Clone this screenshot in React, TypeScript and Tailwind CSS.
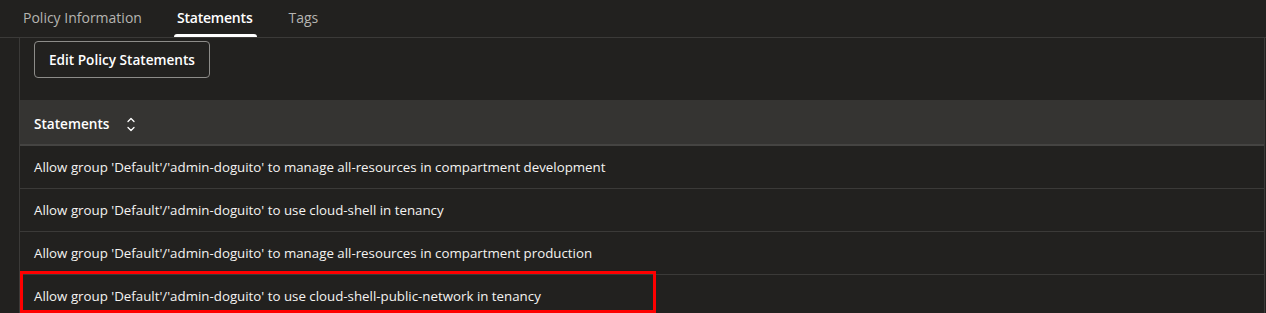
import { ChevronDown, ChevronUp } from 'lucide-react';

const statements = [
  "Allow group 'Default'/'admin-doguito' to manage all-resources in compartment development",
  "Allow group 'Default'/'admin-doguito' to use cloud-shell in tenancy",
  "Allow group 'Default'/'admin-doguito' to manage all-resources in compartment production",
  "Allow group 'Default'/'admin-doguito' to use cloud-shell-public-network in tenancy",
];

const tabs = ['Policy Information', 'Statements', 'Tags'];

const App = () => {
  return (
    <div
      className="w-[1266px] h-[313px] overflow-hidden bg-[#22211f] text-[#f4f3f1]"
      style={{ fontFamily: '"Open Sans", "Liberation Sans", sans-serif' }}
    >
      {/* Tabs */}
      <div className="flex gap-[29px] h-[38px] border-b border-[#3b3a38] pl-[20px]">
        {tabs.map((tab) => {
          const active = tab === 'Statements';
          return (
            <div key={tab} className="relative flex items-center px-[3px] pb-[3px]">
              <span
                className={
                  active
                    ? 'text-[14px] font-semibold text-white tracking-[-0.2px] pr-[1px]'
                    : 'text-[14px] text-[#b5b4b1]'
                }
              >
                {tab}
              </span>
              {active && (
                <div className="absolute left-0 right-0 bottom-0 h-[3px] rounded-t-[3px] bg-white" />
              )}
            </div>
          );
        })}
      </div>

      <div className="flex">
        {/* left gutter */}
        <div className="w-[20px] shrink-0 border-r border-[#3b3a38] h-[276px]" />

        <div className="w-[1245px] border-r border-[#3b3a38]">
          <div className="pl-[14px] pt-[3px] pb-[22px]">
            <button className="h-[37px] px-[14px] pt-[2px] rounded-[4px] border border-[#8d8c89] text-[13.6px] font-semibold text-white">
              Edit Policy Statements
            </button>
          </div>

          {/* Table */}
          <div className="flex items-center h-[46px] pt-[4px] bg-[#353432] border-b-2 border-[#454442] pl-[14px]">
            <span className="text-[13.6px] font-semibold text-white">Statements</span>
            <span className="ml-[16px] flex flex-col items-center text-white">
              <ChevronUp size={12} strokeWidth={2.6} className="-mb-[3px]" />
              <ChevronDown size={12} strokeWidth={2.6} />
            </span>
          </div>

          {statements.map((s, i) => (
            <div
              key={s}
              className="relative flex items-center h-[43px] pt-[1px] border-b border-[#3b3a38] pl-[14px]"
            >
              <span className="text-[13.3px]">{s}</span>
              {i === statements.length - 1 && (
                <div className="absolute left-0 top-[-4px] w-[636px] h-[42px] border-[3px] border-[#ff0000]" />
              )}
            </div>
          ))}
        </div>
      </div>
    </div>
  );
};

export default App;
